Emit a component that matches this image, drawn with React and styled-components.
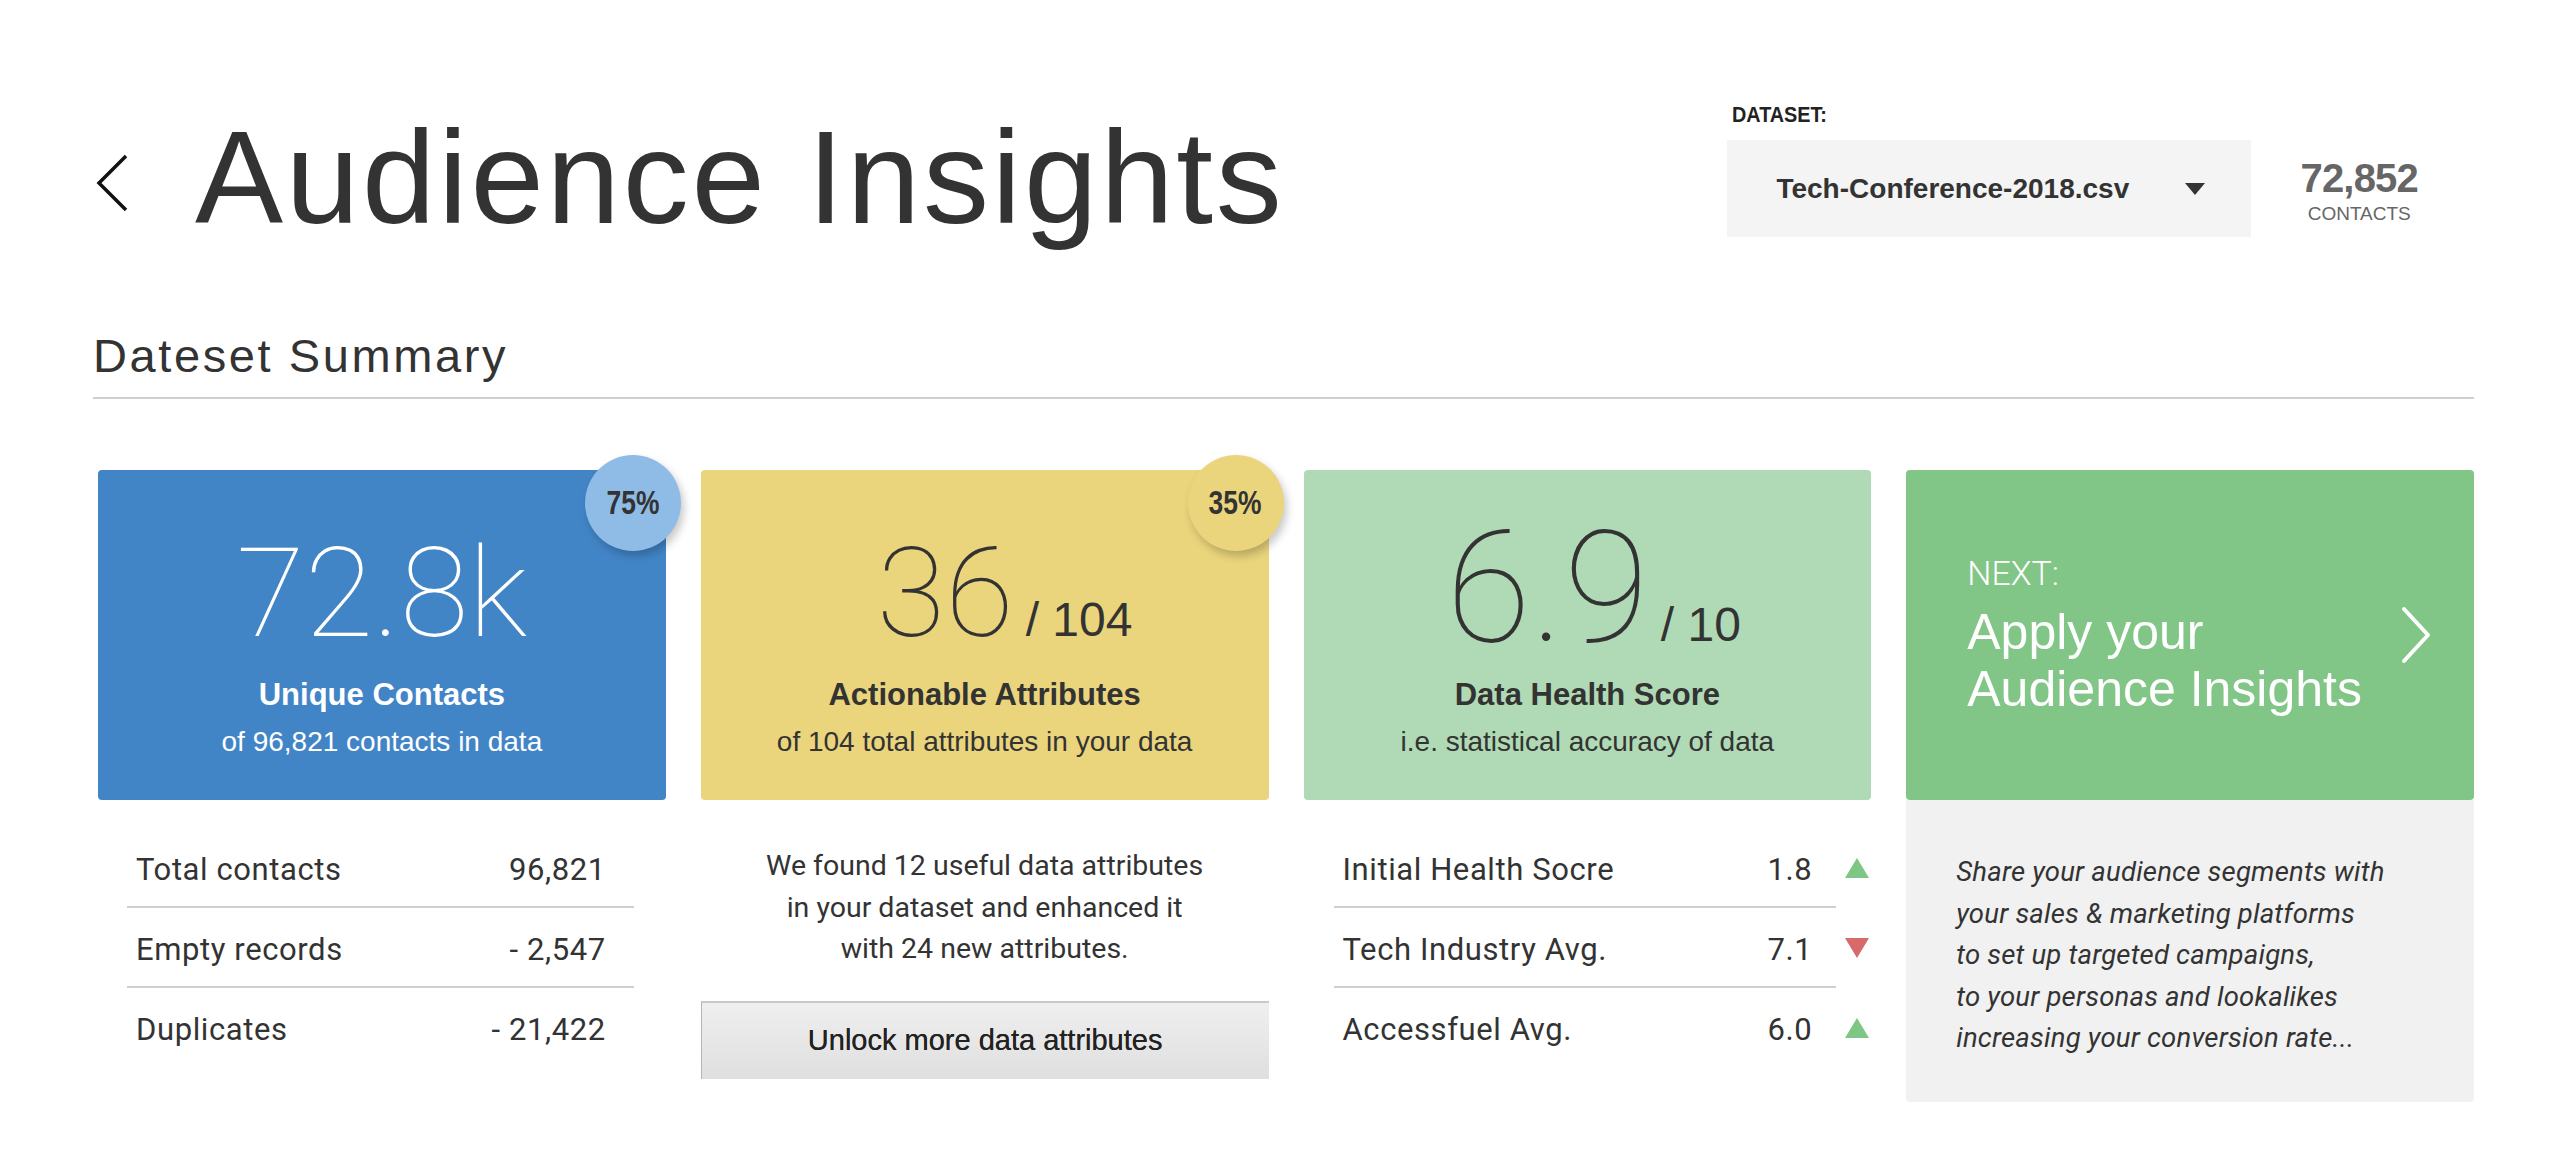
import React from 'react';
import styled, { createGlobalStyle } from 'styled-components';

const HELV = "'Liberation Sans', Arial, sans-serif";
const ROBOTO = "Roboto, 'Noto Sans', sans-serif";

const GlobalStyle = createGlobalStyle`
  html, body {
    margin: 0;
    padding: 0;
    background: #fff;
  }
  body {
    font-family: ${HELV};
    color: #333;
  }
  * {
    box-sizing: border-box;
  }
`;

const Page = styled.div`
  width: 2560px;
  min-height: 1169px;
  padding: 100px 86px 0 93px;
`;

// squeezes bold text to the condensed cut used in the mockup
const Condensed = styled.span`
  display: inline-block;
  transform: scaleX(${(p) => p.$x || 0.82});
  transform-origin: ${(p) => p.$origin || 'center'};
`;

// header
const Header = styled.header`
  display: flex;
  justify-content: space-between;
  align-items: flex-start;
`;

const TitleGroup = styled.div`
  display: flex;
  align-items: flex-start;
`;

const BackButton = styled.button`
  width: 34px;
  height: 60px;
  margin: 53px 0 0 2px;
  padding: 0;
  border: 0;
  background: none;
  cursor: pointer;

  svg {
    display: block;
  }
`;

const Title = styled.h1`
  margin: 12px 0 0 66px;
  font-family: ${HELV};
  font-size: 132px;
  line-height: 132px;
  font-weight: 400;
  letter-spacing: 2.8px;
  color: #333;
`;

const RightGroup = styled.div`
  display: flex;
  align-items: flex-start;
  gap: 49px;
  margin-right: 56px;
`;

const DatasetBlock = styled.div`
  margin-top: 3px;
`;

const DatasetLabel = styled.div`
  padding-left: 5px;
  font-size: 22px;
  line-height: 24px;
  font-weight: 700;
  color: #222;
  white-space: nowrap;
`;

const Select = styled.div`
  display: flex;
  align-items: center;
  justify-content: space-between;
  width: 524px;
  height: 97px;
  margin-top: 13px;
  padding: 0 46px 0 49px;
  background: #f4f4f4;
  font-size: 28px;
  font-weight: 700;
  color: #333;
  cursor: pointer;
`;

const Caret = styled.span`
  width: 0;
  height: 0;
  border-left: 10.5px solid transparent;
  border-right: 10.5px solid transparent;
  border-top: 12px solid #333;
`;

const CountBlock = styled.div`
  margin-top: 56px;
  text-align: center;
  color: #666;
`;

const CountValue = styled.div`
  font-size: 40px;
  line-height: 45px;
  font-weight: 700;
  letter-spacing: -0.8px;
`;

const CountLabel = styled.div`
  margin-top: 2px;
  font-size: 19px;
  line-height: 22px;
`;

// section
const SectionTitle = styled.h2`
  margin: 84px 0 0;
  padding-bottom: 13px;
  border-bottom: 2px solid #cfcfcf;
  font-size: 47px;
  line-height: 56px;
  font-weight: 400;
  letter-spacing: 2.6px;
  color: #333;
`;

const Cards = styled.div`
  display: grid;
  grid-template-columns: repeat(4, 1fr);
  column-gap: 35px;
  margin: 71px 0 0 5px;
`;

const Column = styled.div`
  display: flex;
  flex-direction: column;
`;

const Card = styled.div`
  position: relative;
  height: 330px;
  padding-top: 59px;
  border-radius: 4px;
  background: ${(p) => p.$bg};
  color: ${(p) => p.$fg};
  text-align: center;
`;

const Badge = styled.div`
  position: absolute;
  top: -15px;
  right: -15px;
  width: 96px;
  height: 96px;
  display: flex;
  align-items: center;
  justify-content: center;
  border-radius: 50%;
  background: ${(p) => p.$bg};
  box-shadow: 3px 5px 8px rgba(0, 0, 0, 0.22);
  font-size: 33px;
  font-weight: 700;
  color: #333;
`;

const FigureRow = styled.div`
  display: flex;
  justify-content: center;
  align-items: baseline;
  height: 130px;
  padding-left: ${(p) => p.$shift || 0}px;
  white-space: nowrap;
`;

const Figure = styled.span`
  font-family: ${ROBOTO};
  font-weight: 100;
  font-size: ${(p) => p.$size}px;
  line-height: ${(p) => p.$lh || 130}px;
`;

const Unit = styled.span`
  margin-left: 12px;
  font-size: 48px;
  line-height: 48px;
`;

const CardTitle = styled.div`
  margin-top: 21px;
  font-size: 31px;
  line-height: 30px;
  font-weight: 700;
`;

const CardSub = styled.div`
  margin-top: 12px;
  font-size: 28px;
  line-height: 40px;
`;

const NextCard = styled.div`
  height: 330px;
  display: flex;
  align-items: center;
  justify-content: space-between;
  padding: 0 43px 0 61px;
  border-radius: 4px;
  background: #81c687;
  color: #fff;
  cursor: pointer;
`;

const NextLabel = styled.div`
  font-family: ${ROBOTO};
  font-weight: 300;
  font-size: 34px;
  line-height: 40px;
`;

const NextTitle = styled.div`
  margin-top: 11px;
  font-size: 50px;
  line-height: 57px;
`;

// lower blocks
const StatList = styled.div`
  margin: 28px ${(p) => p.$right}px 0 ${(p) => p.$left}px;
`;

const StatRow = styled.div`
  display: flex;
  align-items: center;
`;

const StatLine = styled.div`
  flex: 1;
  display: flex;
  justify-content: space-between;
  padding: 22px ${(p) => p.$pr}px 16px 9px;
  border-bottom: 2px solid ${(p) => (p.$last ? 'transparent' : '#d0d0d0')};
  font-family: ${ROBOTO};
  font-size: 31px;
  line-height: 40px;
  letter-spacing: 0.6px;
  color: #333;
`;

const Marker = styled.div`
  width: 35px;
  display: flex;
  justify-content: flex-end;
  padding-right: 2px;
`;

const Triangle = styled.span`
  width: 0;
  height: 0;
  border-left: 12px solid transparent;
  border-right: 12px solid transparent;
  ${(p) =>
    p.$up
      ? 'border-bottom: 20px solid #7dc684;'
      : 'border-top: 20px solid #d96a6b;'}
`;

const Note = styled.p`
  margin: 45px 0 0;
  font-family: ${ROBOTO};
  font-size: 28.5px;
  line-height: 41.5px;
  text-align: center;
  color: #333;
`;

const UnlockButton = styled.button`
  width: 100%;
  height: 78px;
  margin-top: 31px;
  padding: 0;
  border: 0;
  border-top: 2px solid #c8c8c8;
  border-left: 1px solid #b5b5b5;
  background: linear-gradient(#efefef, #dfdfdf);
  font-family: ${HELV};
  font-size: 29px;
  color: #222;
  text-shadow: 0 0 0.4px #222;
  cursor: pointer;
`;

const Panel = styled.div`
  height: 302px;
  padding: 51px 20px 0 50px;
  border-radius: 0 0 4px 4px;
  background: #f1f1f1;
  font-family: ${ROBOTO};
  font-style: italic;
  font-size: 27.5px;
  line-height: 41.5px;
  letter-spacing: 0.2px;
  color: #333;
`;

const contactStats = [
  { label: 'Total contacts', value: '96,821' },
  { label: 'Empty records', value: '- 2,547' },
  { label: 'Duplicates', value: '- 21,422' },
];

const healthStats = [
  { label: 'Initial Health Socre', value: '1.8', up: true },
  { label: 'Tech Industry Avg.', value: '7.1', up: false },
  { label: 'Accessfuel Avg.', value: '6.0', up: true },
];

export default function App() {
  return (
    <>
      <GlobalStyle />
      <Page>
        <Header>
          <TitleGroup>
            <BackButton aria-label="Back">
              <svg width="34" height="60" viewBox="0 0 34 60">
                <polyline points="31,3 4,30 31,57" fill="none" stroke="#111" strokeWidth="3.5" />
              </svg>
            </BackButton>
            <Title>Audience Insights</Title>
          </TitleGroup>
          <RightGroup>
            <DatasetBlock>
              <DatasetLabel>
                <Condensed $x={0.9} $origin="left">DATASET:</Condensed>
              </DatasetLabel>
              <Select>
                <span>Tech-Conference-2018.csv</span>
                <Caret />
              </Select>
            </DatasetBlock>
            <CountBlock>
              <CountValue>72,852</CountValue>
              <CountLabel>CONTACTS</CountLabel>
            </CountBlock>
          </RightGroup>
        </Header>

        <SectionTitle>Dateset Summary</SectionTitle>

        <Cards>
          <Column>
            <Card $bg="#4285c7" $fg="#fff">
              <Badge $bg="#8fbce6">
                <Condensed $x={0.8}>75%</Condensed>
              </Badge>
              <FigureRow>
                <Figure $size={125}>72.8k</Figure>
              </FigureRow>
              <CardTitle>Unique Contacts</CardTitle>
              <CardSub>of 96,821 contacts in data</CardSub>
            </Card>
            <StatList $left={29} $right={32}>
              {contactStats.map((s, i) => (
                <StatRow key={s.label}>
                  <StatLine $pr={28} $last={i === contactStats.length - 1}>
                    <span>{s.label}</span>
                    <span>{s.value}</span>
                  </StatLine>
                </StatRow>
              ))}
            </StatList>
          </Column>

          <Column>
            <Card $bg="#ead57c" $fg="#333">
              <Badge $bg="#ead57c">
                <Condensed $x={0.8}>35%</Condensed>
              </Badge>
              <FigureRow $shift={40}>
                <Figure $size={125}>36</Figure>
                <Unit>/ 104</Unit>
              </FigureRow>
              <CardTitle>Actionable Attributes</CardTitle>
              <CardSub>of 104 total attributes in your data</CardSub>
            </Card>
            <Note>
              We found 12 useful data attributes
              <br />
              in your dataset and enhanced it
              <br />
              with 24 new attributes.
            </Note>
            <UnlockButton>Unlock more data attributes</UnlockButton>
          </Column>

          <Column>
            <Card $bg="#b0dab5" $fg="#333">
              <FigureRow $shift={12}>
                <Figure $size={155} $lh={118}>
                  6.9
                </Figure>
                <Unit>/ 10</Unit>
              </FigureRow>
              <CardTitle>Data Health Score</CardTitle>
              <CardSub>i.e. statistical accuracy of data</CardSub>
            </Card>
            <StatList $left={30} $right={0}>
              {healthStats.map((s, i) => (
                <StatRow key={s.label}>
                  <StatLine $pr={24} $last={i === healthStats.length - 1}>
                    <span>{s.label}</span>
                    <span>{s.value}</span>
                  </StatLine>
                  <Marker>
                    <Triangle $up={s.up} />
                  </Marker>
                </StatRow>
              ))}
            </StatList>
          </Column>

          <Column>
            <NextCard>
              <div>
                <NextLabel>NEXT:</NextLabel>
                <NextTitle>
                  Apply your
                  <br />
                  Audience Insights
                </NextTitle>
              </div>
              <svg width="30" height="58" viewBox="0 0 30 58">
                <polyline
                  points="3,3 27,29 3,55"
                  fill="none"
                  stroke="#fff"
                  strokeWidth="4"
                  strokeLinecap="round"
                  strokeLinejoin="round"
                />
              </svg>
            </NextCard>
            <Panel>
              Share your audience segments with
              <br />
              your sales &amp; marketing platforms
              <br />
              to set up targeted campaigns,
              <br />
              to your personas and lookalikes
              <br />
              increasing your conversion rate...
            </Panel>
          </Column>
        </Cards>
      </Page>
    </>
  );
}
